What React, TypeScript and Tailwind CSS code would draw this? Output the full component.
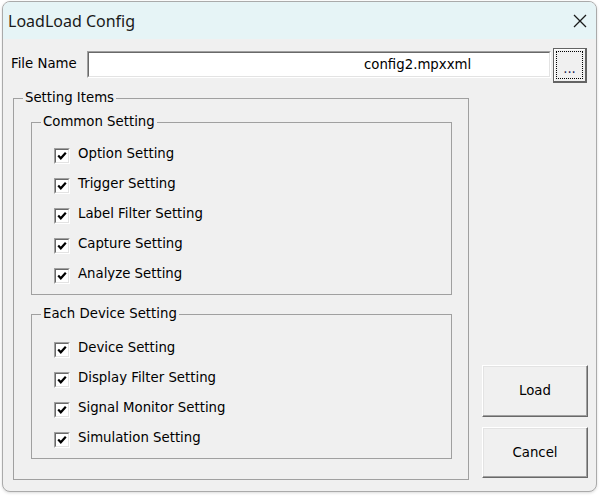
import type { ReactNode } from "react";

const commonItems = [
  "Option Setting",
  "Trigger Setting",
  "Label Filter Setting",
  "Capture Setting",
  "Analyze Setting",
];

const deviceItems = [
  "Device Setting",
  "Display Filter Setting",
  "Signal Monitor Setting",
  "Simulation Setting",
];

/** Classic sunken checkbox, always ticked. */
function CheckItem({ label }: { label: string }) {
  return (
    <div className="flex h-[30px] items-center gap-[8px]">
      <span className="mt-[3px] flex h-4 w-4 items-center justify-center border border-b-white border-l-[#a0a0a0] border-r-white border-t-[#a0a0a0]">
        <span className="flex h-[14px] w-[14px] items-center justify-center border border-b-[#e3e3e3] border-l-[#696969] border-r-[#e3e3e3] border-t-[#696969] bg-white">
          <svg width="10" height="10" viewBox="0 0 10 10" aria-hidden>
            <polyline points="1.2,4.6 3.8,7.3 8.8,1.8" fill="none" stroke="#000" strokeWidth="2.2" />
          </svg>
        </span>
      </span>
      <span>{label}</span>
    </div>
  );
}

/** Etched group box: the legend breaks the top line. */
function GroupBox({
  title,
  className = "",
  bodyClassName = "",
  children,
}: {
  title: string;
  className?: string;
  bodyClassName?: string;
  children: ReactNode;
}) {
  return (
    <fieldset className={`min-w-0 border border-[#a0a0a0] ${className}`}>
      <legend className="ml-[9px] px-[2px] leading-4">{title}</legend>
      <div className={bodyClassName}>{children}</div>
    </fieldset>
  );
}

function PushButton({ label, className = "" }: { label: string; className?: string }) {
  return (
    <button
      type="button"
      className={`flex w-[106px] items-center justify-center border border-b-[#696969] border-l-white border-r-[#696969] border-t-white bg-[#f0f0f0] shadow-[inset_-1px_-1px_0_#a0a0a0,inset_1px_1px_0_#e3e3e3] ${className}`}
    >
      {label}
    </button>
  );
}

export default function App() {
  return (
    <div className="h-[498px] w-[600px] bg-white pl-[2px] pt-px font-['DejaVu_Sans',sans-serif] text-[13.3px] text-black">
      <div className="flex h-[491px] w-[595px] flex-col overflow-hidden rounded-lg border border-[#aaaaaa] bg-[#f0f0f0] shadow-[0_1px_3px_rgba(0,0,0,0.15)]">
        {/* title bar */}
        <div className="flex h-[37px] shrink-0 items-center justify-between bg-[#e6f4f6] pl-[5px] pr-[9px]">
          <span className="font-['Noto_Sans',sans-serif] text-[16px] text-[#1a1a1a]">LoadLoad Config</span>
          <svg width="14" height="14" viewBox="0 0 14 14" aria-hidden>
            <path d="M1 1 L13 13 M13 1 L1 13" stroke="#1a1a1a" strokeWidth="1.3" />
          </svg>
        </div>

        {/* file row */}
        <div className="mt-[9px] flex h-[35px] pl-[8px]">
          <span className="w-[76px] self-center pb-[4px]">File Name</span>
          <div className="mt-[3px] flex h-[27px] w-[464px] items-center border border-b-white border-l-[#a0a0a0] border-r-white border-t-[#a0a0a0]">
            <div className="flex h-full w-full items-center border border-b-[#e3e3e3] border-l-[#696969] border-r-[#e3e3e3] border-t-[#696969] bg-white pl-[275px]">
              config2.mpxxml
            </div>
          </div>
          <button
            type="button"
            className="ml-[2px] h-[35px] w-[34px] border border-[#646464] border-b-2 border-r-2 bg-[#f0f0f0] p-[2px] shadow-[inset_1px_1px_0_white]"
          >
            <span className="flex h-full w-full items-end justify-center border border-dotted border-black pb-[3px] leading-none text-[#1a1a50]">
              ...
            </span>
          </button>
        </div>

        {/* main area */}
        <div className="mt-[7px] flex flex-1 pb-[12px] pl-[10px]">
          <GroupBox
            title="Setting Items"
            className="w-[456px]"
            bodyClassName="pb-[20px] pl-[17px] pr-[16px]"
          >
            <GroupBox
              title="Common Setting"
              className="mt-[8px]"
              bodyClassName="pb-[5px] pl-[22px] pt-[9px]"
            >
              {commonItems.map((item) => (
                <CheckItem key={item} label={item} />
              ))}
            </GroupBox>
            <GroupBox
              title="Each Device Setting"
              className="mt-[11px]"
              bodyClassName="pb-[5px] pl-[22px] pt-[11px]"
            >
              {deviceItems.map((item) => (
                <CheckItem key={item} label={item} />
              ))}
            </GroupBox>
          </GroupBox>

          <div className="ml-[13px] flex flex-col justify-end gap-[10px] pb-[2px]">
            <PushButton label="Load" className="h-[52px]" />
            <PushButton label="Cancel" className="h-[51px]" />
          </div>
        </div>
      </div>
    </div>
  );
}
